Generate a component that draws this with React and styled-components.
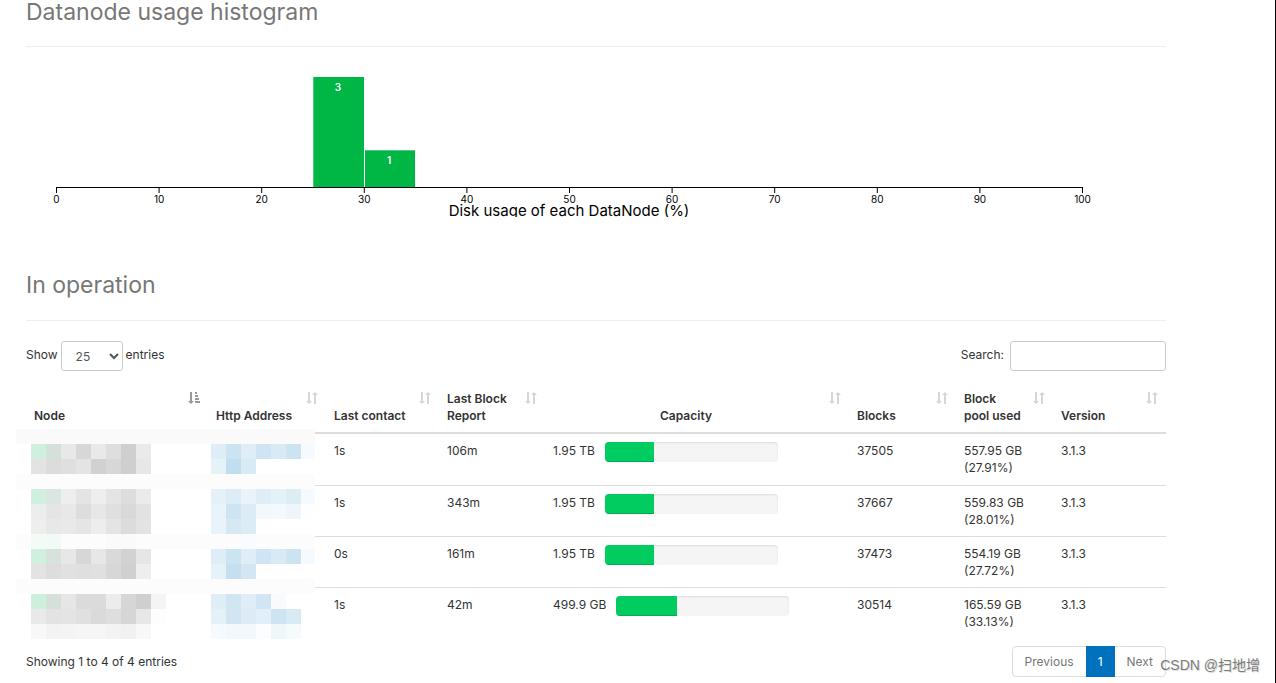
import React, { useState } from 'react'
import styled, { createGlobalStyle } from 'styled-components'

const nodes = [
  { contact: '1s', report: '106m', capacity: '1.95 TB', percent: 28.4, blocks: 37505, pool: '557.95 GB', poolPercent: '(27.91%)', version: '3.1.3' },
  { contact: '1s', report: '343m', capacity: '1.95 TB', percent: 28.5, blocks: 37667, pool: '559.83 GB', poolPercent: '(28.01%)', version: '3.1.3' },
  { contact: '0s', report: '161m', capacity: '1.95 TB', percent: 28.3, blocks: 37473, pool: '554.19 GB', poolPercent: '(27.72%)', version: '3.1.3' },
  { contact: '1s', report: '42m', capacity: '499.9 GB', percent: 35.2, blocks: 30514, pool: '165.59 GB', poolPercent: '(33.13%)', version: '3.1.3' },
]

const columns = [
  { label: 'Node', width: 182, sorted: true },
  { label: 'Http Address', width: 118 },
  { label: 'Last contact', width: 113 },
  { label: 'Last Block Report', width: 106 },
  { label: 'Capacity', width: 304, center: true },
  { label: 'Blocks', width: 107 },
  { label: 'Block pool used', width: 97 },
  { label: 'Version', width: 113 },
]

// hidden host names: one row of tiles per line, "." is a plain tile
const tileRows = [
  'fafafa*20',
  '. cff0de d6e0da e8e8e8 d7d7d7 e9e9e9 dedede cfcfcf eaeaea . . . . dfedf6 cce4f1 deedf6 d1e4f3 d9eaf4 cce4f1 f5fafe',
  '. e3e3e3 dcdcdc dfdfdf e4e4e4 d1d1d1 d7d7d7 cfcfcf e7e7e7 . . . . e5f2f8 c1ddf0 d8eaf4 . . . .',
  'fcfcfc*20',
  '. cff0de dce6e0 eeeeee e4e4e4 eeeeee e4e4e4 dddddd ebebeb . . . . e4f1f8 dcedf6 e9f3fb deedf6 e4f1f7 ddedf6 f5fafe',
  '. eceeed e5e5e5 e8e8e8 dddddd e7e7e7 dfdfdf d9d9d9 e2e2e2 . . . . e9f3fa cee4f2 dcebf5 f2f8fc f3f9fc eef6f9 fdfeff',
  '. eeeeee e8e8e8 e9e9e9 e5e5e5 ededed e4e4e4 dcdcdc e3e3e3 . . . . e9f3fb d5e8f4 dcecf5 fefefe . . .',
  'fcfcfc f3fbf6 f2faf6 fcfcfc fcfcfc fcfcfc fafafa fafafa fcfcfc fcfcfc fcfcfc fcfcfc fcfcfc fcfcfc fcfcfc f9fbfd fcfcfc fcfcfc fcfcfc fcfcfc',
  '. cff0de d8e1dc e7e7e7 d7d7d7 e7e7e7 d9d9d9 d2d2d2 e6e6e6 . . . . dfedf6 cce4f1 deedf6 d1e4f3 d9eaf4 cce4f1 f5fafe',
  '. e3e3e3 dddddd e1e1e1 dfdfdf e0e0e0 d7d7d7 d0d0d0 eeeeee . . . . e5f2f8 c6dff0 d2e6f3 . . . .',
  'fcfcfc*20',
  '. cdf0dc d6e0da e6e6e6 dbdbdb dbdbdb ececec d6d6d6 cfcfcf f4f4f4 . . . dfedf7 d1e6f3 deedf6 d1e5f4 f7fbfd . .',
  '. e9e9e9 e3e3e3 e4e4e4 e0e0e0 dadada dedede d6d6d6 e7e7e7 fdfdfd . . . e5f1f8 d1e5f3 deebf6 e1eff8 cee4f2 d8eaf4 .',
  '. f8f8f8 f3f3f3 f4f4f4 f6f6f6 f6f6f6 f3f3f3 f1f1f1 f8f8f8 . . . . f5fafe f2f8fc f2f8fc fbfdfe eef7fa f5fafd .',
]

const expandTiles = (row) => {
  if (!row.includes('*')) return row.split(' ')
  const [color, count] = row.split('*')
  return Array(Number(count)).fill(color)
}

const TileCover = () => (
  <Cover viewBox="0 0 299 210" aria-hidden="true">
    <rect width="299" height="210" fill="#fff" />
    {tileRows.map((row, y) =>
      expandTiles(row).map((color, x) =>
        color === '.' ? null : (
          <rect key={`${x}-${y}`} x={x * 15} y={y * 15} width="15" height="15" fill={`#${color}`} shapeRendering="crispEdges" />
        )
      )
    )}
  </Cover>
)

const SortIcon = ({ sorted }) => (
  <IconSlot $sorted={sorted} viewBox="0 0 14 14" aria-hidden="true">
    {sorted ? (
      <>
        <path d="M3 1h2v9h2L4 13 1 10h2z" />
        <path d="M8 1h2v2H8zM8 4h3v2H8zM8 7h4v2H8zM8 10h5v2H8z" />
      </>
    ) : (
      <>
        <path d="M3 1h2v9h2L4 13 1 10h2z" />
        <path d="M9 13h2V4h2l-3-3-3 3h2z" />
      </>
    )}
  </IconSlot>
)

const Histogram = () => {
  const ticks = [0, 10, 20, 30, 40, 50, 60, 70, 80, 90, 100]
  return (
    <Chart viewBox="0 0 1140 150" role="img" aria-label="Disk usage of each DataNode">
      <rect x="287.3" y="10" width="50.7" height="110" fill="#00b644" />
      <rect x="339" y="83.3" width="50" height="36.7" fill="#00b644" />
      <BarLabel x="312" y="24">3</BarLabel>
      <BarLabel x="363" y="97">1</BarLabel>
      <path d="M30.5 126v-5.5h1026v5.5" fill="none" stroke="#000" />
      {ticks.map((tick) => (
        <g key={tick}>
          <path d={`M${30.5 + tick * 10.26} 120v6`} stroke="#000" />
          <text x={30.5 + tick * 10.26} y="136">{tick}</text>
        </g>
      ))}
      <AxisTitle x="543" y="149">Disk usage of each DataNode (%)</AxisTitle>
    </Chart>
  )
}

const App = () => {
  const [pageSize, setPageSize] = useState('25')
  const [search, setSearch] = useState('')

  return (
    <>
      <GlobalStyle />
      <Page>
        <Heading>Datanode usage histogram</Heading>
        <Histogram />
        <Heading $spaced>In operation</Heading>

        <Toolbar>
          <Label>
            Show
            <Select value={pageSize} onChange={(e) => setPageSize(e.target.value)}>
              <option>10</option>
              <option>25</option>
              <option>50</option>
              <option>100</option>
            </Select>
            entries
          </Label>
          <Label $wide>
            Search:
            <SearchInput type="search" value={search} onChange={(e) => setSearch(e.target.value)} />
          </Label>
        </Toolbar>

        <TableWrapper>
          <Table>
            <colgroup>
              {columns.map((column) => (
                <Column key={column.label} $width={column.width} />
              ))}
            </colgroup>
            <thead>
              <tr>
                {columns.map((column) => (
                  <HeaderCell key={column.label} $center={column.center}>
                    {column.label}
                    <SortIcon sorted={column.sorted} />
                  </HeaderCell>
                ))}
              </tr>
            </thead>
            <tbody>
              {nodes.map((node) => (
                <tr key={node.blocks}>
                  <Cell />
                  <Cell />
                  <Cell>{node.contact}</Cell>
                  <Cell>{node.report}</Cell>
                  <Cell>
                    <Capacity>
                      {node.capacity}
                      <Progress>
                        <ProgressBar style={{ width: `${node.percent}%` }} />
                      </Progress>
                    </Capacity>
                  </Cell>
                  <Cell>{node.blocks}</Cell>
                  <Cell>
                    {node.pool}
                    <br />
                    {node.poolPercent}
                  </Cell>
                  <Cell>{node.version}</Cell>
                </tr>
              ))}
            </tbody>
          </Table>
          <TileCover />
        </TableWrapper>

        <Footer>
          <span>Showing 1 to 4 of 4 entries</span>
          <Pagination>
            <PageLink href="#">Previous</PageLink>
            <PageLink href="#" $active>1</PageLink>
            <PageLink href="#">Next</PageLink>
          </Pagination>
        </Footer>
        <Watermark>CSDN @扫地增</Watermark>
      </Page>
    </>
  )
}

const GlobalStyle = createGlobalStyle`
  * {
    box-sizing: border-box;
  }
  body {
    margin: 0;
    background: #fff;
    color: #333;
    font-family: Inter, "Liberation Sans", "Noto Sans CJK SC", sans-serif;
    font-size: 12px;
    line-height: 17px;
  }
`;

const Page = styled.main`
  position: relative;
  min-height: 100vh;
  padding: 0 109px 0 26px;
  border-right: 1px solid #000;
`;

const Heading = styled.h1`
  margin: 0 0 20px;
  padding: ${({ $spaced }) => ($spaced ? '54px 0 21px' : '0 0 22px')};
  border-bottom: 1px solid #eee;
  color: #777;
  font-size: 23px;
  font-weight: 400;
  line-height: ${({ $spaced }) => ($spaced ? '28px' : '24px')};
`;

const Chart = styled.svg`
  display: block;
  width: 100%;
  text {
    font-size: 10px;
    text-anchor: middle;
  }
`;

const BarLabel = styled.text`
  fill: #fff;
  font-weight: 600;
`;

const AxisTitle = styled.text`
  && {
    font-size: 15px;
  }
`;

const Toolbar = styled.div`
  display: flex;
  justify-content: space-between;
`;

const Label = styled.label`
  display: flex;
  align-items: flex-start;
  gap: ${({ $wide }) => ($wide ? '6px' : '3px')};
  line-height: 27px;
`;

const Select = styled.select`
  width: 62px;
  height: 30px;
  padding: 5px 10px;
  border: 1px solid #ccc;
  border-radius: 3px;
  background: #fff;
  color: #555;
  font: inherit;
  line-height: 18px;
`;

const SearchInput = styled.input`
  width: 156px;
  height: 30px;
  padding: 5px 10px;
  border: 1px solid #ccc;
  border-radius: 3px;
  font: inherit;
  line-height: 18px;
`;

const TableWrapper = styled.div`
  position: relative;
  margin-top: 11px;
`;

const Table = styled.table`
  width: 100%;
  table-layout: fixed;
  border-spacing: 0;
`;

const Column = styled.col`
  width: ${({ $width }) => $width}px;
`;

const HeaderCell = styled.th`
  position: relative;
  padding: 8px 30px 8px 8px;
  border-bottom: 2px solid #ddd;
  text-align: ${({ $center }) => ($center ? 'center' : 'left')};
  vertical-align: bottom;
  font-weight: 600;
`;

const Cell = styled.td`
  height: 51px;
  padding: 8px;
  border-top: 1px solid #ddd;
  vertical-align: top;
  tr:first-child > & {
    border-top: 0;
  }
`;

const IconSlot = styled.svg`
  position: absolute;
  top: 9px;
  right: 7px;
  width: 14px;
  height: 14px;
  fill: ${({ $sorted }) => ($sorted ? '#999' : '#d6d6d6')};
`;

const Capacity = styled.div`
  display: flex;
  gap: 10px;
`;

const Progress = styled.div`
  width: 173px;
  height: 20px;
  overflow: hidden;
  border-radius: 4px;
  background: #f5f5f5;
  box-shadow: inset 0 1px 2px rgba(0, 0, 0, 0.1);
`;

const ProgressBar = styled.div`
  height: 100%;
  background: #00cc5f;
  box-shadow: inset 0 -1px 0 rgba(0, 0, 0, 0.15);
`;

const Cover = styled.svg`
  position: absolute;
  top: 47px;
  left: -10px;
  width: 299px;
  height: 210px;
`;

const Footer = styled.footer`
  display: flex;
  justify-content: space-between;
  align-items: center;
  margin-top: 8px;
`;

const Pagination = styled.nav`
  display: flex;
  border: 1px solid #ddd;
  border-radius: 4px;
`;

const PageLink = styled.a`
  margin: ${({ $active }) => ($active ? '-1px 0' : '0')};
  padding: ${({ $active }) => ($active ? '7px 12px' : '6px 12px')};
  background: ${({ $active }) => ($active ? '#0071bc' : 'transparent')};
  color: ${({ $active }) => ($active ? '#fff' : '#777')};
  text-decoration: none;
`;

const Watermark = styled.div`
  position: absolute;
  right: 15px;
  bottom: 8px;
  color: #7d7d7d;
  font-family: "Liberation Sans", "Noto Sans CJK SC", sans-serif;
  font-size: 14px;
  line-height: 20px;
  text-shadow: 1px 1px 0 #ddd;
`;

export default App
